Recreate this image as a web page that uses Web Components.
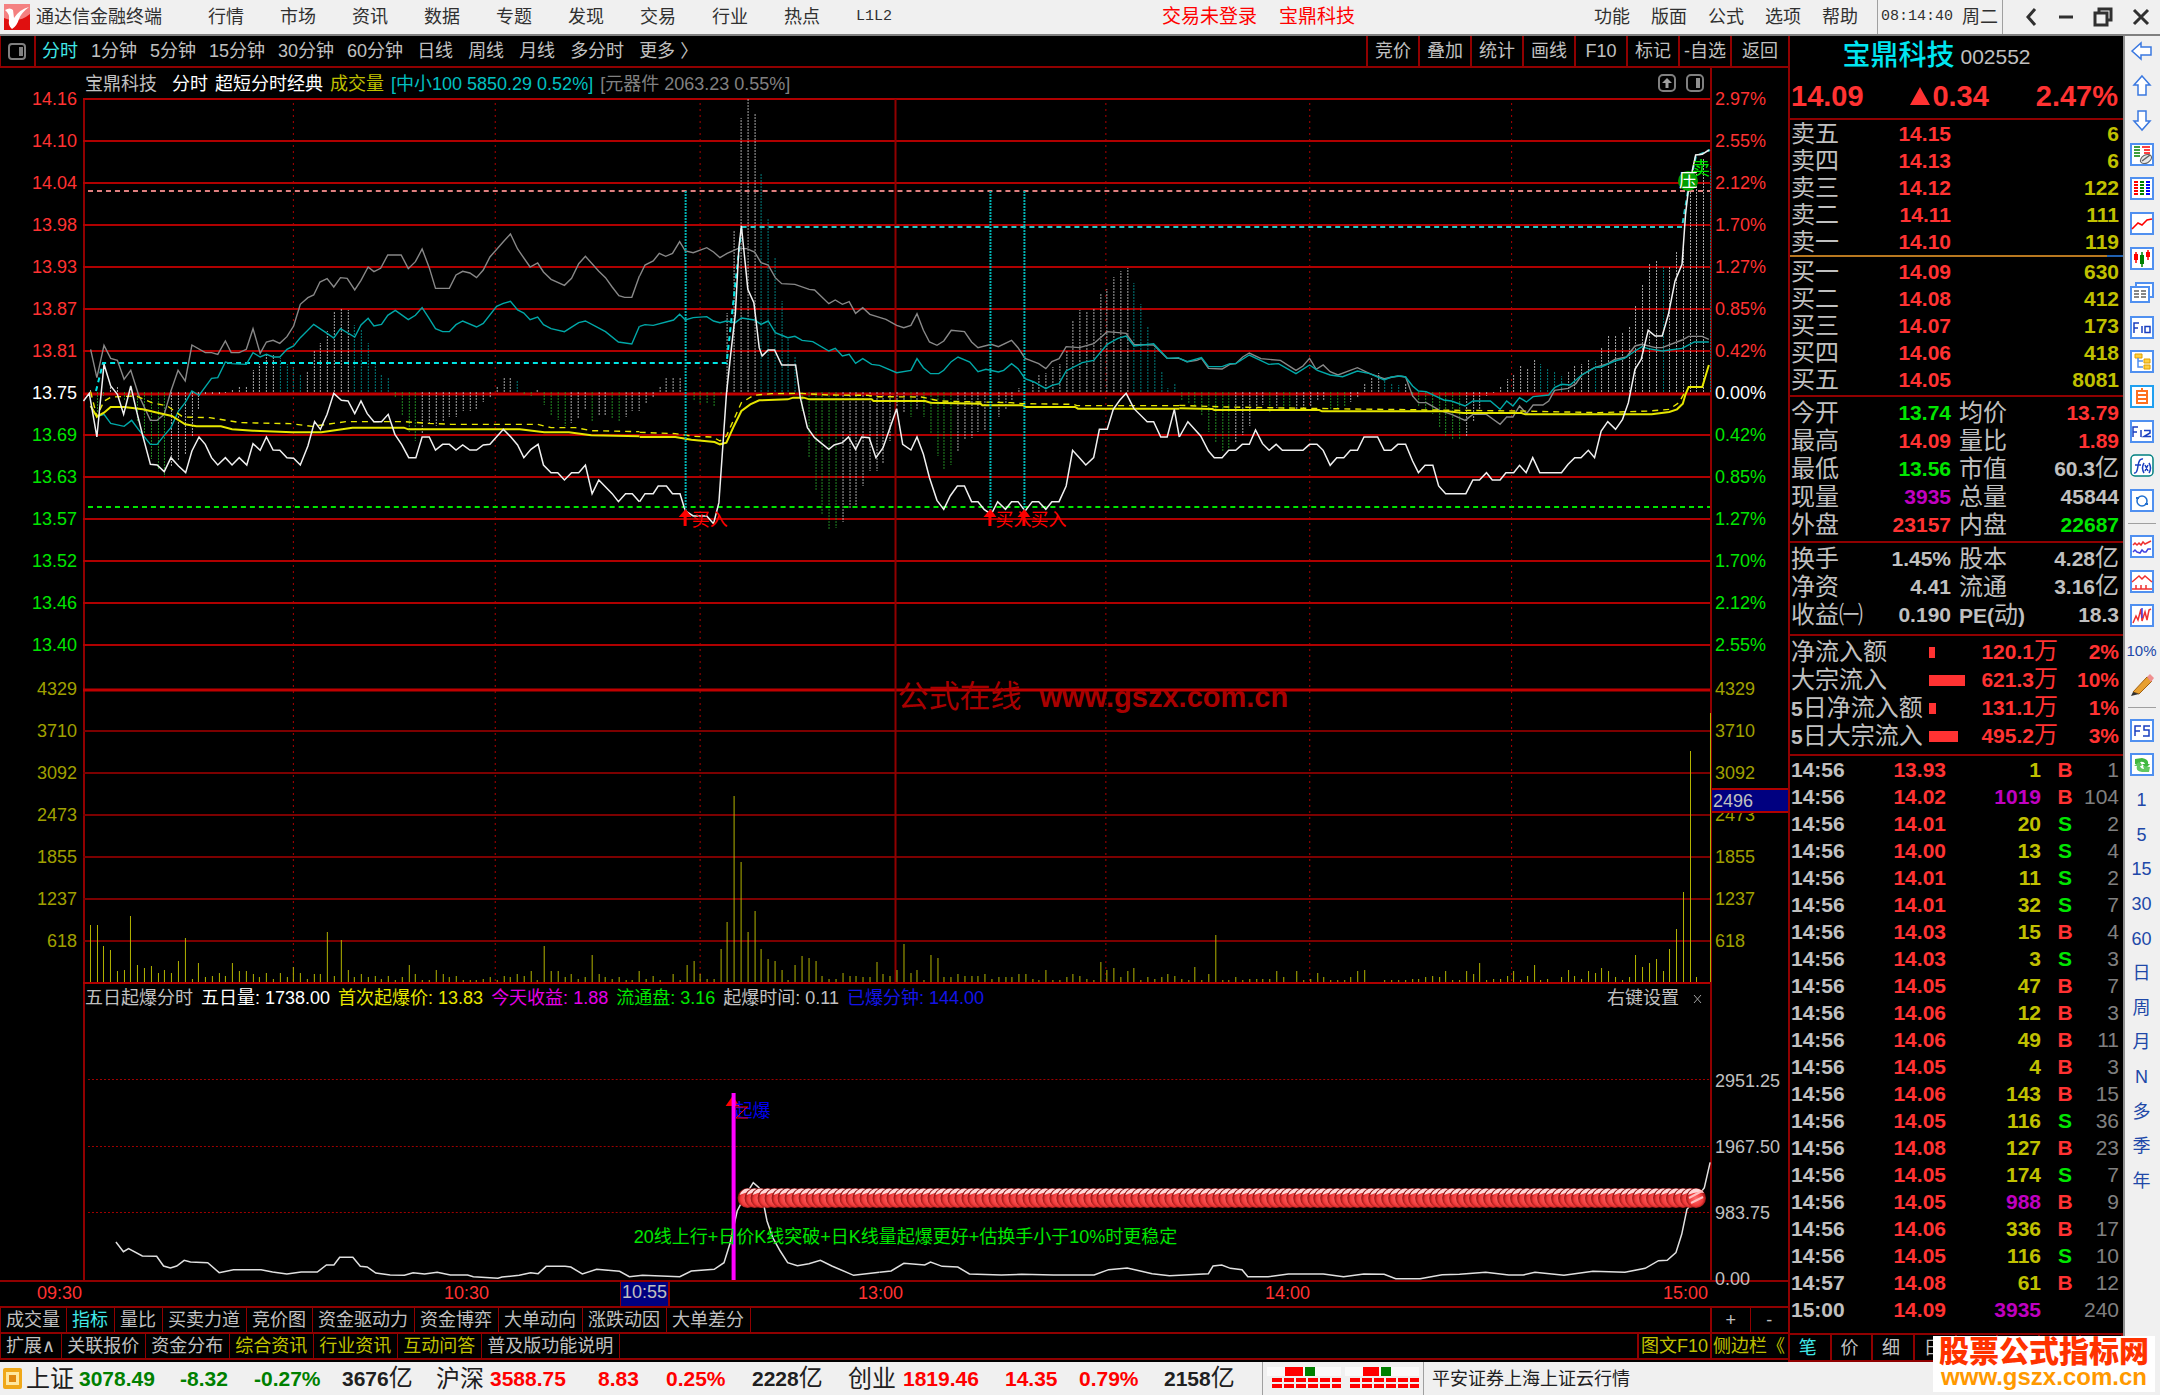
<!DOCTYPE html>
<html lang="zh-CN">
<head>
<meta charset="utf-8">
<title>通达信金融终端</title>
<style>
html,body{margin:0;background:#000}
body{font:18px/24px "Liberation Sans","Noto Sans CJK SC",sans-serif;color:#c0c0c0}
</style>
</head>
<body>
<tdx-app></tdx-app>
<script>
const BASE = `<style>
:host{display:block;box-sizing:border-box}
*{box-sizing:border-box}
button{font:inherit;color:inherit;background:none;border:0;margin:0;padding:0;white-space:nowrap;cursor:pointer}
a{color:inherit;text-decoration:none}
svg{display:block}
.r{color:#ff3232}.g{color:#00e600}.y{color:#c0c000}.m{color:#c000c0}.w{color:#fff}.c{color:#00c0c0}.k{color:#808080}
</style>`;
function define(name, html, ready) {
  customElements.define(name, class extends HTMLElement {
    constructor() {
      super();
      const root = this.attachShadow({mode: 'open'});
      root.innerHTML = BASE + (typeof html === 'function' ? html(this) : html);
      if (ready) ready(root, this);
    }
  });
}

/* ---------- top menu ---------- */
define('tdx-menubar', `<style>
:host{display:flex;align-items:center;height:36px;background:#f0f0f0;color:#303030;border-bottom:2px solid #808080;padding-left:4px}
.brand{display:flex;align-items:center;gap:6px;width:204px}
nav{display:flex;gap:36px}
.mono{font-family:"Liberation Mono","Noto Sans CJK SC",monospace;font-size:15px}
.alert{display:flex;gap:22px;color:#f00;font-size:19px;margin:0 auto 0 270px}
.right{gap:21px;margin-right:19px}
.clock{display:flex;gap:9px;align-items:center;height:34px;border-left:1px solid #a0a0a0;border-right:1px solid #a0a0a0;padding:0 4px 0 3px}
.win{display:flex;align-items:center;justify-content:space-between;width:127px;margin:0 10px 0 20px}
</style>
<div class="brand"><svg width="26" height="26" viewBox="0 0 26 26"><rect width="26" height="26" fill="#e01010"/><path d="M0 0H26V10Q14 20 0 14Z" fill="#f48080"/><path d="M1 6Q6 3 9 6L10 14Q16 5 25 3 17 9 15 15 13 22 8 25 4 22 5 16 6 10 1 6Z" fill="#fff"/></svg><span>通达信金融终端</span></div>
<nav><button>行情</button><button>市场</button><button>资讯</button><button>数据</button><button>专题</button><button>发现</button><button>交易</button><button>行业</button><button>热点</button><button class="mono">L1L2</button></nav>
<div class="alert"><a href="#login">交易未登录</a><a href="#stock">宝鼎科技</a></div>
<nav class="right"><button>功能</button><button>版面</button><button>公式</button><button>选项</button><button>帮助</button></nav>
<div class="clock"><time class="mono">08:14:40</time><span>周二</span></div>
<div class="win">
<button aria-label="后退"><svg width="16" height="20" viewBox="0 0 16 20"><path d="M12 2 5 10 12 18" fill="none" stroke="#303030" stroke-width="3"/></svg></button>
<button aria-label="最小化"><svg width="16" height="20" viewBox="0 0 16 20"><path d="M1 10H15" stroke="#303030" stroke-width="3"/></svg></button>
<button aria-label="还原"><svg width="20" height="20" viewBox="0 0 20 20"><path d="M6 6V2H18V13H14M2 6H14V18H2Z" fill="none" stroke="#303030" stroke-width="3"/></svg></button>
<button aria-label="关闭"><svg width="18" height="20" viewBox="0 0 18 20"><path d="M2 3 16 17M16 3 2 17" stroke="#303030" stroke-width="3"/></svg></button>
</div>`);

/* ---------- period bar ---------- */
define('tdx-periods', `<style>
:host{display:flex;height:32px;border-bottom:2px solid #900000;border-left:1px solid #900000}
.toggle{width:35px;border-right:2px solid #900000;padding-left:7px}
.p{display:flex;gap:13px;align-items:center;padding-left:6px}
.p + .p{gap:15px;padding-left:14px}
.on{color:#40e8e8}
.tools{display:flex;margin-left:auto;width:422px}
.tools button{flex:0 0 52px;border-left:2px solid #900000}
.tools button:last-child{flex:1}
</style>
<button class="toggle" aria-label="侧栏"><svg width="19" height="19" viewBox="0 0 19 19"><rect x="1" y="2" width="16" height="15" rx="3" fill="none" stroke="#808080" stroke-width="2"/><rect x="11" y="5" width="4" height="9" fill="#808080"/></svg></button>
<div class="p"><button class="on">分时</button><button>1分钟</button><button>5分钟</button><button>15分钟</button><button>30分钟</button><button>60分钟</button></div>
<div class="p"><button>日线</button><button>周线</button><button>月线</button><button>多分时</button><button>更多 〉</button></div>
<div class="tools"><button>竞价</button><button>叠加</button><button>统计</button><button>画线</button><button>F10</button><button>标记</button><button>-自选</button><button>返回</button></div>`);

/* ---------- chart data ---------- */
const N = 240, X0 = 83, STEP = 1628 / N;
const VOL = `57 57 36 32 11 12 66 17 14 16 9 12 9 21 44 3 19 5 6 9 6 19 11 11 8 5 9 3 9 5 15 9 3 8 8 50 6 42 12 5 8 5 6 3 6 2 5 17 8 2 2 12 8 5 6 2 2 2 3 5 2 6 5 8 6 11 2 36 11 11 5 8 3 5 27 8 5 3 5 2 2 11 3 6 2 0 8 2 17 21 8 3 3 33 60 186 120 50 71 33 23 21 12 2 17 26 24 21 6 3 3 9 6 6 5 5 20 8 6 12
38 9 12 2 27 24 5 5 8 6 6 6 8 3 5 5 5 8 8 3 2 12 2 2 5 8 6 3 2 20 12 14 5 11 14 2 5 3 5 8 6 3 2 15 2 8 47 2 2 5 2 3 3 3 3 11 5 0 11 2 3 9 5 2 2 2 5 11 12 0 0 2 2 2 2 3 3 5 6 5 11 2 2 11 8 19 2 3 3 6 11 2 6 17 2 3 0 5 12 6 3 11 9 14 11 5 2 5 27 15 19 23 11 33 53 90 231 5 0 269`.split(/\s+/).map(Number);
const HIST = `2w -20g -4g 8w 6w -8g -6g -30g -42g -67g -78g -85g -75w -68w -63w -44w -17w -3w -3w -3w -1w 2w 6w 6w 22w 28w 39w 37w 34c 28c 25c 17c 20w 41w 49w 61w 80w 83w 82w 67c 63c 49c 30c 18c 14c -5g -23g -40g -49g -41w -31w -34w -30w -25w -25w -19w -19w -17w -10w -5w 5w 14w 15w 11c -2g -4g 2w -13g -23g -28g -34g -31w -27w -18w -29g -24w -24w -27g -30g -25w -19w -19w -12w -5w 6w 14w 14w 14w 0w -8g -12g -12g -14g -2g 79w 162w 274w 293w 278w 219c 173c 134c 91c 54c 35c -19g -65g -99g -122g -138g -136g -130w -116w -114w -94w -79w -79w -72w -49w -15w
-21w -25g -18w -25g -41g -64g -77g -73g -60w -48w -46w -40w -38w 0w -25w -18w -8w 4w 0w 12w 18w 19w 25w 28w 41w 71w 82w 81w 83w 98w 103w 115w 121w 124w 109c 88c 65c 46c 21c 4c 9c -9g -11g -15g -24g -40g -51g -59g -57g -51w -43w -34w -19w -13w -21g -16w -18g -17g -19w -17w -15w -9w -8w -17g -18g -15g -10w -5w 8w 15w 19w 15c 8c 7c 9w -5g -15g -20g -22g -35g -44g -48g -48g -44w -30w -18w -4w -1w 5w 13w 18w 26w 24w 33w 28c 24c 21c 16c 21w 26w 28w 33w 31c 45w 57w 57w 59w 65w 87w 107w 129w 132w 125c 126w 141w 148w 202w 222w 233w 226c`.split(/\s+/);

/* Each series is traced in three session blocks; a block has its own scale. */
const BLOCKS = ['translate(0 80) scale(.44643 .33333)', 'translate(640 80) scale(.35714 .33333)', 'translate(1180 80) scale(.38903 .33333)'];
const SERIES = [
 {stroke:'#888', w:1.4, d:[
 '203,805 217,890 233,793 248,832 263,838 278,895 293,868 310,940 337,1018 352,1018 368,1000 383,930 399,868 415,900 430,792 460,815 474,815 488,820 505,780 518,815 536,815 552,805 567,743 583,817 597,783 612,778 627,787 643,767 658,735 673,670 690,650 703,642 717,603 733,593 748,618 763,590 778,592 795,627 809,598 825,558 838,572 853,562 869,522 899,522 915,563 931,542 946,504 962,560 976,622 1007,622 1022,582 1037,571 1053,576 1068,590 1083,567 1098,528 1128,482 1144,459 1160,504 1188,558 1205,546 1218,573 1235,595 1265,613 1281,592 1297,548 1312,526 1342,571 1357,590 1372,618 1387,644 1400,649 1416,649 1433,585',
 '0,585 15,552 38,540 55,517 73,526 92,517 112,482 128,510 150,515 188,500 207,513 225,530 245,517 275,503 300,503 322,513 340,545 360,552 380,590 398,608 435,610 475,625 490,627 530,668 548,657 568,670 587,662 605,697 625,680 645,700 690,715 720,733 740,740 760,733 777,698 795,748 812,783 833,793 852,780 873,748 910,752 930,783 948,800 985,790 1005,797 1042,778 1060,800 1080,832 1118,848 1138,863 1155,842 1175,833 1195,797 1232,800 1272,788 1310,752 1363,757 1385,790 1440,792 1478,832 1512,832',
 '0,832 20,842 45,838 57,832 75,862 110,864 130,850 145,848 163,828 180,816 210,833 260,838 300,868 318,855 335,832 352,865 370,852 388,872 408,882 458,860 490,878 527,893 562,885 582,888 600,945 615,965 635,965 670,988 700,1000 735,1018 755,1000 790,1000 825,1030 842,1008 858,1008 875,975 893,998 910,972 935,972 950,960 965,928 1000,922 1020,908 1035,882 1068,860 1102,848 1120,835 1150,828 1172,795 1190,790 1225,800 1242,800 1293,777 1310,766 1345,766 1362,775']},
 {stroke:'#00a8a8', w:1.4, d:[
 '203,975 217,1007 233,1000 248,1027 278,1036 295,1018 310,1045 337,1090 352,1090 368,1063 383,1040 400,990 415,965 430,930 446,943 474,892 488,890 505,843 520,848 552,850 567,815 583,828 597,820 612,828 627,828 643,805 658,795 673,770 703,730 733,757 748,771 763,743 795,768 809,732 825,712 838,735 855,730 869,703 886,688 915,716 931,703 946,680 962,713 976,743 992,752 1007,752 1022,731 1037,720 1068,738 1083,727 1113,676 1128,667 1144,661 1160,687 1174,696 1188,716 1205,708 1218,731 1235,743 1265,752 1297,725 1312,720 1357,752 1386,783 1416,789 1433,736',
 '0,736 15,731 38,733 95,717 112,700 128,717 150,710 188,707 207,720 225,725 243,720 268,725 285,711 322,717 340,730 360,720 380,755 415,770 435,766 455,778 485,782 530,810 548,802 568,825 587,820 605,847 625,833 650,850 672,853 720,875 760,868 777,833 795,860 815,878 838,878 852,868 873,842 892,828 925,843 948,872 970,865 1005,873 1020,868 1042,848 1060,863 1080,893 1105,903 1138,923 1155,913 1175,908 1195,870 1240,845 1272,838 1310,790 1340,772 1363,765 1385,795 1440,788 1478,832 1512,830',
 '0,832 20,842 57,830 75,857 110,857 130,848 145,848 180,822 230,850 255,848 300,878 335,852 355,868 388,882 420,887 458,870 490,878 527,897 545,888 570,885 582,888 600,915 615,930 635,932 680,957 700,960 735,975 755,960 800,960 825,985 842,960 858,975 875,950 893,963 910,947 950,942 965,920 983,910 1005,912 1035,882 1068,860 1085,858 1120,840 1145,832 1172,810 1190,797 1206,803 1242,810 1293,802 1325,783 1362,783']},
 {stroke:'#e6e600', w:2, d:[
 '203,975 217,1007 233,995 248,978 278,978 320,985 353,995 385,1005 415,1030 440,1036 495,1036 520,1045 567,1049 655,1054 720,1054 790,1040 905,1040 915,1045 1165,1045 1220,1054 1275,1054 1325,1063 1433,1066',
 '0,1068 100,1068 145,1076 210,1083 225,1090 243,1085 262,1040 285,990 310,970 335,958 415,955 430,950 460,950 475,955 650,955 655,960 800,960 815,965 955,968 960,973 1075,973 1080,978 1220,978 1228,983 1512,983',
 '0,982 85,984 90,987 360,987 367,991 690,991 730,996 880,996 890,1000 1215,1000 1260,993 1280,985 1295,968 1302,940 1310,918 1345,918 1362,852']},
 {stroke:'#e6e600', w:1.4, dash:'6 5', d:[
 '203,932 217,1007 233,960 250,948 305,945 340,965 375,975 410,1008 470,1010 540,1025 650,1028 700,1036 775,1022 905,1022 960,1027 1010,1030 1205,1030 1235,1040 1290,1040 1325,1049 1433,1052',
 '0,1054 100,1058 150,1066 205,1068 225,1080 243,1065 262,1020 285,965 320,943 370,938 450,937 530,942 640,943 660,947 790,948 840,960 955,963 1040,965 1075,968 1215,970 1225,974 1512,974',
 '0,973 120,978 385,983 650,987 870,990 1080,995 1210,990 1260,985 1285,965 1302,930']},
 {stroke:'#f0f0f0', w:1.5, d:[
 '187,960 200,937 217,1068 233,850 248,915 263,940 277,1000 293,915 305,985 320,1065 337,1150 352,1152 368,1172 383,1130 400,1155 416,1175 430,1110 446,1068 460,1090 474,1130 488,1152 505,1130 520,1152 536,1130 553,1152 567,1088 583,1108 597,1068 612,1107 627,1108 643,1130 658,1132 673,1152 690,1095 705,1022 718,1045 733,1000 748,937 765,958 780,960 795,998 809,960 823,998 838,1022 855,1022 870,1000 885,1060 900,1090 916,1130 932,1130 946,1068 962,1068 976,1107 992,1090 1007,1090 1022,1107 1037,1092 1053,1107 1068,1107 1083,1092 1098,1090 1128,1045 1145,1068 1160,1092 1174,1130 1190,1105 1206,1090 1218,1152 1235,1175 1250,1175 1265,1197 1281,1175 1297,1175 1312,1152 1327,1238 1342,1197 1372,1238 1386,1262 1402,1238 1417,1238 1433,1262',
 '0,1262 15,1238 38,1238 52,1215 75,1215 92,1238 113,1238 128,1290 150,1305 188,1305 207,1328 222,1265 235,1065 243,940 255,820 268,700 278,500 285,435 297,560 303,625 320,665 335,800 343,825 360,807 378,807 398,852 437,852 450,950 470,1040 490,1070 530,1105 545,1092 568,1085 585,1068 605,1105 622,1068 643,1070 662,1130 682,1100 720,983 737,1090 760,1107 777,1068 795,1120 812,1190 833,1258 852,1285 870,1245 890,1215 910,1215 930,1262 948,1262 965,1285 985,1300 1003,1262 1025,1285 1042,1262 1060,1262 1080,1290 1100,1262 1118,1262 1138,1285 1155,1262 1175,1262 1195,1215 1213,1108 1232,1130 1250,1152 1272,1130 1288,1045 1310,1045 1327,985 1345,958 1363,937 1385,983 1422,1022 1440,1022 1460,1068 1478,1068 1498,985 1512,1068',
 '0,1068 22,1022 55,1065 75,1110 90,1130 110,1130 127,1108 145,1108 162,1090 180,1090 196,1047 214,1088 231,1108 249,1090 265,1108 318,1108 335,1090 354,1090 370,1108 388,1153 405,1130 423,1130 440,1108 458,1108 475,1068 510,1068 527,1108 545,1108 562,1090 582,1090 600,1140 615,1175 632,1153 652,1153 667,1215 685,1238 737,1238 755,1197 772,1197 790,1175 805,1197 825,1197 840,1175 860,1175 875,1153 892,1175 909,1130 927,1175 983,1175 1000,1150 1017,1130 1033,1130 1052,1108 1068,1130 1085,1050 1102,1022 1122,1045 1140,1015 1155,965 1172,865 1188,835 1206,748 1224,765 1242,765 1258,700 1275,600 1293,550 1302,400 1310,320 1328,222 1345,220 1362,207']},
];
const xAt = i => Math.round(X0 + i * STEP);
const GRID_X = [293, 495, 700, 1106, 1310, 1512];

function priceSvg() {
  let s = '';
  for (let k = 0; k < 14; k++) { if (k !== 7) s += `<path d="M83 ${98 + k * 42}H1711" stroke="#b00000" stroke-width="2"/>`; }
  for (let k = 0; k < 7; k++) s += `<path d="M83 ${730 + k * 42}H1711" stroke="${k === 6 ? '#b00000' : '#7c0000'}" stroke-width="2"/>`;
  s += '<path d="M83 393H1711M83 689H1711" stroke="#c00000" stroke-width="3"/>';
  for (const x of GRID_X) s += `<path d="M${x}.5 102V982" stroke="#b00000" stroke-dasharray="2 4"/>`;
  s += '<path d="M896 98V982" stroke="#900000" stroke-width="2"/>';
  const tone = {w: '#c4c4c4', g: '#28a028', c: '#009090'};
  HIST.forEach((t, n) => {
    const h = parseInt(t), x = xAt(n + 1) + .5;
    if (h) s += `<path d="M${x} 391V${391 - h}" stroke="${tone[t.at(-1)]}" stroke-dasharray="2 1" stroke-opacity=".85"/>`;
  });
  VOL.forEach((h, n) => { if (h) s += `<path d="M${xAt(n + 1)}.5 981V${981 - h}" stroke="#b4b400"/>`; });
  s += '<path d="M88 190H1711" stroke="#e08080" stroke-width="2" stroke-dasharray="5 4"/>';
  s += '<path d="M96 390 103 362H727L742 226" stroke="#00e6e6" stroke-width="2" stroke-dasharray="5 4" fill="none"/>';
  s += '<path d="M742 226H1683L1689 190 1697 155 1711 149" stroke="#20c8c8" stroke-width="2" stroke-dasharray="5 4" fill="none"/>';
  s += '<path d="M88 506H1711" stroke="#00e600" stroke-width="2" stroke-dasharray="5 4"/>';
  for (const l of SERIES) l.d.forEach((p, b) => {
    s += `<g transform="${BLOCKS[b]}"><polyline points="${p}" fill="none" stroke="${l.stroke}" stroke-width="${l.w}" vector-effect="non-scaling-stroke" ${l.dash ? `stroke-dasharray="${l.dash}"` : ''}/></g>`;
  });
  for (const x of [686, 991, 1025]) s += `<path d="M${x} 190V512" stroke="#00b4b4" stroke-width="2" stroke-dasharray="2 1"/><path d="M${x - 7} 516 ${x} 508 ${x + 6} 516H${x + 1}V525H${x - 2}V516Z" fill="#f00"/>`;
  return `<svg viewBox="83 98 1628 885" preserveAspectRatio="none" aria-hidden="true">${s}</svg>`;
}

const pct = x => ((x - 83) / 16.28).toFixed(2) + '%';
define('tdx-price-chart', `<style>
:host{position:relative;height:885px}
svg{width:100%;height:100%;overflow:visible}
.pin{position:absolute;line-height:20px;white-space:nowrap}
.buy{top:411px;color:#f00}
.press{top:72px;width:20px;height:20px;border-radius:50%;background:#00a000;color:#fff;text-align:center;margin-left:-10px}
.sell{top:60px;color:#00e600}
.mark{top:582px;display:flex;gap:18px;align-items:center;color:#a80000;line-height:32px;font-size:31px}
.mark b{font-size:29px}
</style>${priceSvg()}
<span class="pin buy" style="left:${pct(692)}">买入</span><span class="pin buy" style="left:${pct(996)}">买入</span><span class="pin buy" style="left:${pct(1031)}">买入</span>
<span class="pin sell" style="left:${pct(1693)}">卖</span><span class="pin press" style="left:${pct(1689)}">压</span>
<div class="pin mark" style="left:${pct(898)}"><span>公式在线</span><b>www.gszx.com.cn</b></div>`);

/* ---------- indicator pane ---------- */
function burstSvg() {
  let s = '<defs><radialGradient id="ball" cx=".5" cy=".55" r=".5"><stop offset="0" stop-color="#ff7070"/><stop offset=".7" stop-color="#f03838"/><stop offset="1" stop-color="#8c1010"/></radialGradient></defs>';
  for (const y of [1078, 1145, 1211]) s += `<path d="M88 ${y}.5H1711" stroke="#a00000" stroke-dasharray="2 2"/>`;
  const a = '202,813 215,842 224,833 248,855 273,856 285,885 297,891 308,885 321,868 332,873 362,875 382,905 407,896 455,896 475,903 500,909 525,903 553,903 569,882 582,882 592,859 615,859 628,886 640,888 655,906 680,912 705,913 720,905 740,909 762,904 785,912 815,912 825,917 868,922 875,918 905,913 925,905 938,908 952,886 985,886 995,888 1015,909 1040,895 1080,901 1097,917 1120,913 1185,917 1205,900 1245,895 1262,875 1272,820 1285,720 1297,680 1313,635 1323,650 1330,690 1337,750 1347,800 1360,840 1373,875 1390,884 1410,878 1430,868 1450,885 1488,913 1533,904';
  const b = '0,904 20,900 42,877 78,882 88,873 108,886 135,888 155,909 210,912 245,910 300,912 370,912 395,896 427,891 470,908 500,914 550,910 567,908 575,885 590,882 605,892 625,896 635,917 670,917 705,909 765,909 800,917 835,909 870,910 890,923 932,923 970,911 1000,910 1045,904 1085,912 1110,912 1130,904 1180,913 1230,901 1285,904 1320,892 1343,869 1358,868 1373,845 1383,790 1392,715 1405,690 1422,650 1432,574';
  s += `<g transform="translate(0 970) scale(.574 .33333)"><polyline points="${a}" fill="none" stroke="#e0e0e0" stroke-width="1.5" vector-effect="non-scaling-stroke"/></g>`;
  s += `<g transform="translate(880 970) scale(.5804 .33333)"><polyline points="${b}" fill="none" stroke="#e0e0e0" stroke-width="1.5" vector-effect="non-scaling-stroke"/></g>`;
  for (let i = 98; i <= 238; i++) { const x = xAt(i); s += `<circle cx="${x}" cy="1197" r="10" fill="url(#ball)"/><path d="M${x - 8} 1194Q${x - 6} 1188 ${x} 1187.500Q${x + 6} 1188 ${x + 8} 1192Q${x} 1190 ${x - 8} 1194Z" fill="#ffd8d8"/>`; }
  s += '<path d="M1692 1202 1704 1196M1690 1197 1703 1190" stroke="#ffc0c0" stroke-width="2"/>';
  s += '<path d="M726 1105 733 1095 740 1105Z" fill="#f00"/><path d="M734 1092V1279" stroke="#f0f" stroke-width="4"/>';
  return `<svg viewBox="83 983 1628 296" preserveAspectRatio="none" aria-hidden="true">${s}</svg>`;
}
define('tdx-burst-chart', `<style>
:host{position:relative;height:296px}
svg{position:absolute;inset:0;width:100%;height:100%;overflow:visible}
header{position:relative;z-index:1;display:flex;gap:8px;padding:2px 1px 0 2px;white-space:nowrap}
header .set{margin-left:auto}
header svg{position:static;width:22px;height:22px}
.b{color:#1414e6}.m{color:#e600e6}.y{color:#e6e600}
.pin{position:absolute;white-space:nowrap;z-index:1;line-height:20px}
.zap{left:${pct(735)};top:117px;color:#0000f0}
.zap svg{position:absolute;inset:auto;left:0;top:3px;width:14px;height:16px}
.note{left:${pct(634)};top:243px;color:#00e600}
</style>
<header><span>五日起爆分时</span><span class="w">五日量: 1738.00</span><span class="y">首次起爆价: 13.83</span><span class="m">今天收益: 1.88</span><span class="g">流通盘: 3.16</span><span>起爆时间: 0.11</span><span class="b">已爆分钟: 144.00</span><button class="set">右键设置</button><button aria-label="关闭指标"><svg viewBox="0 0 22 22"><path d="M7 8 14 16M14 8 7 16" stroke="#a0a0a0"/></svg></button></header>
${burstSvg()}
<span class="pin zap">起爆<svg viewBox="0 0 14 16"><path d="M0 3H13M12 3 1 14H13" fill="none" stroke="#f00"/></svg></span>
<span class="pin note">20线上行+日价K线突破+日K线量起爆更好+估换手小于10%时更稳定</span>`);

/* ---------- axis ---------- */
const PRICES = ['14.16','14.10','14.04','13.98','13.93','13.87','13.81','13.75','13.69','13.63','13.57','13.52','13.46','13.40'];
const PCTS = ['2.97%','2.55%','2.12%','1.70%','1.27%','0.85%','0.42%','0.00%','0.42%','0.85%','1.27%','1.70%','2.12%','2.55%'];
const VOLS = ['4329','3710','3092','2473','1855','1237','618'];
define('tdx-axis', el => {
  const list = el.getAttribute('side') === 'left' ? PRICES : PCTS;
  return `<style>
:host{padding-top:10px}
:host([side=left]){text-align:right;padding-right:6px}
:host([side=right]){padding-left:3px;position:relative}
div{line-height:42px;height:42px}
.v{color:#a0a000}.first{margin-top:2px}
.cursor{position:absolute;z-index:1;top:720px;left:0;right:0;height:25px;line-height:22px;background:#000080;border:solid #b00000;border-width:2px 0;color:#c0c0c0;padding-left:1px}
</style>` + list.map((t, i) => `<div class="${i < 7 ? 'r' : i > 7 ? 'g' : 'w'}">${t}</div>`).join('') +
  VOLS.map((t, i) => `<div class="v${i ? '' : ' first'}">${t}</div>`).join('') +
  (el.getAttribute('side') === 'right' ? '<div class="cursor">2496</div>' : '');
});

/* ---------- workspace ---------- */
define('tdx-workspace', `<style>
:host{display:flex;flex-direction:column;min-width:0}
.grid{display:grid;grid-template-columns:83px minmax(0,1fr) 76px}
.plot{border:solid #900000;border-width:0 2px 0 0;position:relative}
.plot::before{content:"";position:absolute;left:0;top:31px;bottom:0;border-left:2px solid #900000}
.low .plot::before{top:0}
.title{display:flex;gap:7px;height:31px;align-items:center;padding:0 6px 0 2px;white-space:nowrap}
.title .gap{margin-right:8px}
.title svg{margin-top:-2px}
.title .icons{margin-left:auto;display:flex;gap:10px}
.low{height:296px}
.scale{padding:64px 0 0 3px;line-height:66px;height:296px;position:relative;z-index:1}
.times{display:flex;position:relative;height:28px;border:solid #900000;border-width:2px 0;line-height:23px}
.times span{text-align:right}
.cur{position:absolute;left:620px;top:0;width:50px;height:24px;line-height:20px;background:#000080;border:solid #900000;border-width:0 2px 0 1px;padding-left:1px;color:#c0c0c0}
.tabs{display:flex;height:26px;border-bottom:2px solid #900000}
.tabs button{border-right:1px solid #900000;padding:0 6px 0 5px}
.tabs button:first-child{border-left:1px solid #900000}
.tabs i{font:18px/20px "DejaVu Sans",sans-serif}
.tabs .end{display:flex;margin-left:auto;width:78px;border-left:2px solid #900000}
.tabs .end button{flex:1;padding:0;border-left:0}
.tabs .end button:last-child{border-right:0}
.tabs .end .side{text-align:left;padding-left:1px;overflow:hidden}
.tabs .f10{margin-left:auto;border-left:2px solid #900000;border-right:0;padding:0 2px}
.tabs .f10 + .end{margin-left:0}
.on{color:#40e8e8}
</style>
<tdx-periods></tdx-periods>
<div class="grid"><tdx-axis side="left"></tdx-axis>
<div class="plot"><div class="title"><span class="gap">宝鼎科技</span><span class="w">分时</span><span class="w">超短分时经典</span><span class="y">成交量</span><span class="c">[中小100 5850.29 0.52%]</span><span class="k">[元器件 2063.23 0.55%]</span>
<div class="icons"><svg width="18" height="18" viewBox="0 0 18 18"><rect x="1" y="1" width="16" height="16" rx="4" fill="none" stroke="#808080" stroke-width="2"/><path d="M9 4 14 9H10.500V14H7.500V9H4Z" fill="#a0a0a0"/></svg><svg width="18" height="18" viewBox="0 0 18 18"><rect x="1" y="1" width="16" height="16" rx="4" fill="none" stroke="#808080" stroke-width="2"/><rect x="10" y="4" width="4" height="10" fill="#909090"/></svg></div></div>
<tdx-price-chart></tdx-price-chart></div>
<tdx-axis side="right"></tdx-axis></div>
<div class="grid low"><div></div><div class="plot"><tdx-burst-chart></tdx-burst-chart></div><div class="scale">2951.25<br>1967.50<br>983.75<br>0.00</div></div>
<div class="times r"><span style="flex:0 0 82px">09:30</span><span style="flex:407">10:30</span><span style="flex:414">13:00</span><span style="flex:407">14:00</span><span style="flex:398">15:00</span><span style="flex:0 0 80px"></span><div class="cur">10:55</div></div>
<div class="tabs"><button>成交量</button><button class="on">指标</button><button>量比</button><button>买卖力道</button><button>竞价图</button><button>资金驱动力</button><button>资金博弈</button><button>大单动向</button><button>涨跌动因</button><button>大单差分</button><div class="end"><button>+</button><button>-</button></div></div>
<div class="tabs"><button>扩展<i>∧</i></button><button>关联报价</button><button>资金分布</button><button class="y">综合资讯</button><button class="y">行业资讯</button><button class="y">互动问答</button><button>普及版功能说明</button><button class="y f10">图文F10</button><div class="end"><button class="y side">侧边栏《</button></div></div>`);

/* ---------- quote panel ---------- */
const row = (l, p, v) => `<tr><th>${l}</th><td class="r">${p}</td><td class="y">${v}</td></tr>`;
const ASKS = [['卖五','14.15','6'],['卖四','14.13','6'],['卖三','14.12','122'],['卖二','14.11','111'],['卖一','14.10','119']];
const BIDS = [['买一','14.09','630'],['买二','14.08','412'],['买三','14.07','173'],['买四','14.06','418'],['买五','14.05','8081']];
const STATS = [['今开','13.74','g','均价','13.79','r'],['最高','14.09','r','量比','1.89','r'],['最低','13.56','g','市值','60.3亿',''],['现量','3935','m','总量','45844',''],['外盘','23157','r','内盘','22687','g']];
const BASICS = [['换手','1.45%','','股本','4.28亿',''],['净资','4.41','','流通','3.16亿',''],['收益㈠','0.190','','PE(动)','18.3','']];
const FLOWS = [['净流入额',6,'120.1','2%'],['大宗流入',36,'621.3','10%'],['5日净流入额',7,'131.1','1%'],['5日大宗流入',29,'495.2','3%']];
const TICKS = `14:56 13.93 1 B 1|14:56 14.02 1019 B 104|14:56 14.01 20 S 2|14:56 14.00 13 S 4|14:56 14.01 11 S 2|14:56 14.01 32 S 7|14:56 14.03 15 B 4|14:56 14.03 3 S 3|14:56 14.05 47 B 7|14:56 14.06 12 B 3|14:56 14.06 49 B 11|14:56 14.05 4 B 3|14:56 14.06 143 B 15|14:56 14.05 116 S 36|14:56 14.08 127 B 23|14:56 14.05 174 S 7|14:56 14.05 988 B 9|14:56 14.06 336 B 17|14:56 14.05 116 S 10|14:57 14.08 61 B 12|15:00 14.09 3935 - 240`.split('|').map(t => t.split(' '));
const mix = t => t.replace(/[\u4e00-\u9fff㈠]+/g, '<i>$&</i>').replace('5<i>', '<b>5</b><i>').replace('PE(', '<b>PE(</b>').replace(/<\/i>\)/, '</i><b>)</b>');
const pair = r => `<tr><th>${mix(r[0])}</th><td class="${r[2]}">${mix(r[1])}</td><th class="s">${mix(r[3])}</th><td class="${r[5]}">${mix(r[4])}</td></tr>`;
define('tdx-quote', `<style>
:host{border:solid #900000;border-width:0 0 0 2px;display:flex;flex-direction:column}
.head{height:84px;border-bottom:2px solid #900000;padding:2px 5px 0 1px}
h1{margin:0;font-weight:400;font-size:21px;line-height:34px;display:flex;justify-content:center;gap:6px;align-items:center;padding-right:36px}
h1 b{color:#00e5f0;font-size:28px;font-weight:500}
h1 span{padding-top:2px}
.now{display:flex;justify-content:space-between;font:bold 29px/44px "Liberation Sans","Noto Sans CJK SC",sans-serif}
.now span{display:flex;align-items:center;gap:2px}
table{border-collapse:collapse;table-layout:fixed;width:100%;font:bold 21px/24px "Liberation Sans","Noto Sans CJK SC",sans-serif}
th,td{padding:0;height:28px;white-space:nowrap;text-align:right;overflow:visible}
th{text-align:left;font-weight:400;font-size:24px}
i,th b{font-style:normal;font-size:24px;font-weight:400;line-height:20px}
th b{font-size:21px;font-weight:700}
.box{padding:0 4px 0 1px;border-bottom:2px solid #900000}
.n td,.n th{height:27px}
.ask{border-bottom:2px solid;border-image:linear-gradient(90deg,#b87820 95%,#2060b0 95%) 1}
.s{padding-left:8px}
.bar{height:11px;background:#ff3232;display:block}
.t td.k{font-weight:400}
.t td:first-child{text-align:left}
.t td:nth-child(4){text-align:center;padding-left:6px}
.tabs{display:grid;grid-template-columns:repeat(8,1fr);height:27px}
.tabs button{border-right:2px solid #900000;padding-right:4px}
.tabs .on{color:#40e8e8}
.foot{border-bottom:2px solid #900000}
</style>
<div class="head"><h1><b>宝鼎科技</b><span>002552</span></h1>
<div class="now r"><span>14.09</span><span><svg width="20" height="18" viewBox="0 0 20 18"><path d="M10 0 20 18H0Z" fill="#ff3232"/></svg>0.34</span><span>2.47%</span></div></div>
<div class="box ask"><table class="n"><colgroup><col width="80"><col width="80"><col></colgroup>${ASKS.map(r => row(...r)).join('')}</table></div>
<div class="box" style="padding-top:1px;padding-bottom:2px"><table class="n"><colgroup><col width="80"><col width="80"><col></colgroup>${BIDS.map(r => row(...r)).join('')}</table></div>
<div class="box" style="padding-top:2px;padding-bottom:2px"><table><colgroup><col width="80"><col width="80"><col width="88"><col></colgroup>${STATS.map(pair).join('')}</table></div>
<div class="box" style="padding-top:2px;padding-bottom:5px"><table><colgroup><col width="80"><col width="80"><col width="88"><col></colgroup>${BASICS.map(pair).join('')}</table></div>
<div class="box" style="padding-top:2px;padding-bottom:4px"><table class="r"><colgroup><col width="138"><col width="40"><col width="89"><col></colgroup>${FLOWS.map(f => `<tr><th style="color:#c0c0c0">${mix(f[0])}</th><td><span class="bar" style="width:${f[1]}px"></span></td><td>${f[2]}<i>万</i></td><td>${f[3]}</td></tr>`).join('')}</table></div>
<div class="box" style="padding-bottom:10px"><table class="n t"><colgroup><col width="60"><col width="95"><col width="95"><col width="42"><col></colgroup>${TICKS.map(t => `<tr><td>${t[0]}</td><td class="r">${t[1]}</td><td class="${+t[2] > 900 ? 'm' : 'y'}">${t[2]}</td><td class="${t[3] === 'B' ? 'r' : 'g'}">${t[3] === '-' ? '' : t[3]}</td><td class="k">${t[4]}</td></tr>`).join('')}</table></div>
<div class="tabs foot"><button class="on">笔</button><button>价</button><button>细</button><button>日</button><button aria-label="联"></button><button aria-label="值"></button><button aria-label="主"></button><button aria-label="筹"></button></div>`);

/* ---------- side icons ---------- */
const frame = (inner, c = '#5090f0') => `<svg width="24" height="24" viewBox="0 0 24 24"><rect x="1" y="1" width="22" height="21" fill="#fff" stroke="${c}" stroke-width="2"/>${inner}</svg>`;
const plain = inner => `<svg width="24" height="24" viewBox="0 0 24 24">${inner}</svg>`;
const arrow = r => plain(`<path d="M2 12 11 4V8H21V16H11V20Z" fill="#fff" stroke="#3a78e0" stroke-width="1.500" transform="rotate(${r} 12 12)"/>`);
const ln = (d, c, w = 1.5) => `<path d="${d}" fill="none" stroke="${c}" stroke-width="${w}"/>`;
const ICONS_A = [
 ['后退', arrow(0)], ['上一个', arrow(90)], ['下一个', arrow(-90)],
 ['自选', frame(ln('M4 4H10M4 7H10M4 10H10M4 13H10', '#008000') + ln('M12 4H20M14 7H20M14 10H20', '#f00') + '<ellipse cx="16" cy="16" rx="6" ry="4" transform="rotate(-30 16 16)" fill="#e8e8e8" stroke="#606060"/>' + ln('M12 18 20 12', '#606060'))],
 ['行情', frame(ln('M4 5H8M4 8H8M4 11H8M4 14H8M4 17H8', '#f00', 2) + ln('M10 5H14M10 8H14M10 11H14M10 14H14M10 17H14', '#008000', 2) + ln('M16 5H20M16 8H20M16 11H20M16 14H20M16 17H20', '#00f', 2))],
 ['分时', frame(ln('M2 17 8 11 12 13 17 8 22 7', '#f00'))],
 ['K线', frame(ln('M6 5V16M18 3V13', '#f00') + ln('M12 5V20', '#008000') + '<path d="M4 7h4v6H4zM16 5h4v5h-4z" fill="#f00"/><path d="M10 8h4v9h-4z" fill="#008000"/>')],
 ['多窗', plain('<path d="M6 2H23V16H6Z" fill="#fff" stroke="#5090f0" stroke-width="2"/><path d="M1 6H19V21H1Z" fill="#fff" stroke="#5090f0" stroke-width="2"/>' + ln('M4 10H9M4 13H9M4 16H9M11 10H16M11 13H16M11 16H16', '#606060'))],
 ['F10', frame(ln('M4 17V7H9M4 12H8M12 10V17M15 10.500H20V16.500H15Z', '#1a3fc0'))],
 ['树图', frame('<path d="M5 4h7v4H5zM14 9h6v4h-6zM14 15h6v4h-6z" fill="#ffd040" stroke="#e0a000"/>' + ln('M8 8V17H13M8 11H13', '#5090f0'))],
 ['自选股', frame(ln('M7 6H17V18H7ZM7 10H17M7 14H17M12 3V6', '#ff7020', 2), '#20a0f0')],
 ['F12', frame(ln('M3 17V7H8M3 12H7M11 10V17M14 10.500H20V13L14 16.500H21', '#1a3fc0'))],
 ['公式', plain('<rect x="1" y="1" width="22" height="21" rx="4" fill="#fff" stroke="#008080" stroke-width="1.500"/>' + ln('M4 19Q7 20 8 12 9 4 13 5M5 11H11M14 9Q11 14 14 19M19 9Q22 14 19 19M15 11 18 17M18 11 15 17', '#1a3fc0'))],
 ['刷新', frame('<circle cx="12" cy="12" r="5" fill="none" stroke="#2070d0" stroke-width="1.500"/>' + ln('M6 9 9 9M15 15 18 15', '#2070d0', 2))]];
const ICONS_B = [
 ['双线', frame(ln('M3 10 5 8 7 10 9 8 11 10 13 7 15 9 21 6', '#f03030') + ln('M3 17 5 15 7 17 10 18 12 15 14 17 16 17 18 14 21 14', '#4040e0'))],
 ['面积', frame(ln('M2 12 9 6 12 9 15 6 22 12M2 19H22M6 19V15M11 19V15M16 19V15', '#f03030'))],
 ['波动', frame(ln('M3 19 6 12 8 16 11 5 12 17 15 8 17 16 19 6 21 5', '#f03030') + ln('M12 4V14', '#4040e0'))],
 ['涨幅', '10%'],
 ['画笔', plain('<path d="M3 19 17 4 22 8 9 21Z" fill="#e8a030" stroke="#a06010"/><path d="M17 4 20 1 24 5 21 9Z" fill="#f09090"/><path d="M3 19 9 21 1 23Z" fill="#303030"/>')]];
const ICONS_C = [
 ['F5', frame(ln('M5 17V7H11M5 12H10M20 7H14V11H19V17H13', '#1a3fc0'))],
 ['循环', frame('<path d="M5 6 12 5Q19 6 18 11L20 11 16 15 12 11 15 11Q14 8 10 9L12 12 5 11Z" fill="#40b840"/><path d="M19 19 12 19Q5 18 7 13L4 13 9 9 12 13H10Q11 16 14 16L13 13 20 14Z" fill="#60c860"/>')]];
const WORDS = ['1','5','15','30','60','日','周','月','N','多','季','年'];
const sideBtn = ([n, g]) => `<button aria-label="${n}">${g}</button>`;
define('tdx-sidebar', `<style>
:host{background:#f0f0f0;border-left:2px solid #909090;color:#2048a8;display:flex;flex-direction:column;padding-right:2px}
div{display:flex;flex-direction:column;justify-content:space-between;align-items:center}
button{height:30px;width:33px;display:flex;align-items:center;justify-content:center;font-size:18px}
.a{height:480px}.b{height:168px}.c{height:64px}.d{height:411px;margin-top:5px}
.b button:nth-child(4){font-size:15px}
hr{width:28px;margin:7px auto 8px;border:0;border-top:1px solid #a0a0a0}
</style>
<div class="a">${ICONS_A.map(sideBtn).join('')}</div><hr><div class="b">${ICONS_B.map(sideBtn).join('')}</div><hr>
<div class="c">${ICONS_C.map(sideBtn).join('')}</div><div class="d">${WORDS.map(w => `<button>${w}</button>`).join('')}</div>`);

/* ---------- status bar ---------- */
const heat = w => `<svg width="74" height="24" viewBox="0 0 74 24"><path d="M0 0H74V9H0Z" fill="#fafafa"/><path d="M${18} 0h${w}v9h-${w}z" fill="#f00"/><path d="M${20 + w} 0h10v9h-10z" fill="#008000"/><path d="M5 13H74M5 19H74" stroke="#f00" stroke-width="4" stroke-dasharray="10 2"/></svg>`;
define('tdx-status', `<style>
:host{display:flex;align-items:center;background:#f0f0f0;border-bottom:2px solid #203848;height:35px;color:#202020;padding-left:2px;font:bold 21px/30px "Liberation Sans","Noto Sans CJK SC",sans-serif}
.q{display:grid;align-items:center;white-space:nowrap}
.q1{grid-template-columns:53px 101px 74px 88px 94px}
.q2{grid-template-columns:54px 108px 68px 86px 96px}
.q3{grid-template-columns:55px 102px 74px 85px 98px}
.q i{font-style:normal;font-weight:400;font-size:24px;line-height:20px}
.up{color:#f00}.dn{color:#008000}
.heat{display:flex;gap:4px;border:solid #a0a0a0;border-width:0 1px;height:100%;align-items:center;padding:0 4px}
.src{font-size:18px;font-weight:400;padding-left:8px}
</style>
<svg width="22" height="24" viewBox="0 0 22 24" style="margin-right:2px"><rect x="1" y="1" width="19" height="21" rx="2" fill="#f0a818"/><rect x="4" y="5" width="13" height="13" fill="#ffe8a0"/><rect x="7" y="8" width="7" height="7" fill="#e08810"/></svg>
<div class="q q1"><i>上证</i><span class="dn">3078.49</span><span class="dn">-8.32</span><span class="dn">-0.27%</span><span>3676<i>亿</i></span></div>
<div class="q q2"><i>沪深</i><span class="up">3588.75</span><span class="up">8.83</span><span class="up">0.25%</span><span>2228<i>亿</i></span></div>
<div class="q q3"><i>创业</i><span class="up">1819.46</span><span class="up">14.35</span><span class="up">0.79%</span><span>2158<i>亿</i></span></div>
<div class="heat">${heat(18)}${heat(16)}</div><span class="src">平安证券上海上证云行情</span>`);

/* ---------- site badge ---------- */
define('site-badge', `<style>
:host{position:absolute;right:5px;bottom:5px;width:222px;height:56px;background:#fff;text-align:center;font-weight:700}
b{display:block;color:#ff3300;font-size:30px;line-height:32px}
a{display:block;color:#ff9900;font-size:24px;line-height:18px}
</style><b>股票公式指标网</b><a href="#site">www.gszx.com.cn</a>`);

define('tdx-app', `<style>
:host{display:flex;flex-direction:column;position:relative}
main{display:grid;grid-template-columns:minmax(0,1fr) 335px 37px}
</style>
<tdx-menubar></tdx-menubar>
<main><tdx-workspace></tdx-workspace><tdx-quote></tdx-quote><tdx-sidebar></tdx-sidebar></main>
<tdx-status></tdx-status><site-badge></site-badge>`);
</script>
</body>
</html>
